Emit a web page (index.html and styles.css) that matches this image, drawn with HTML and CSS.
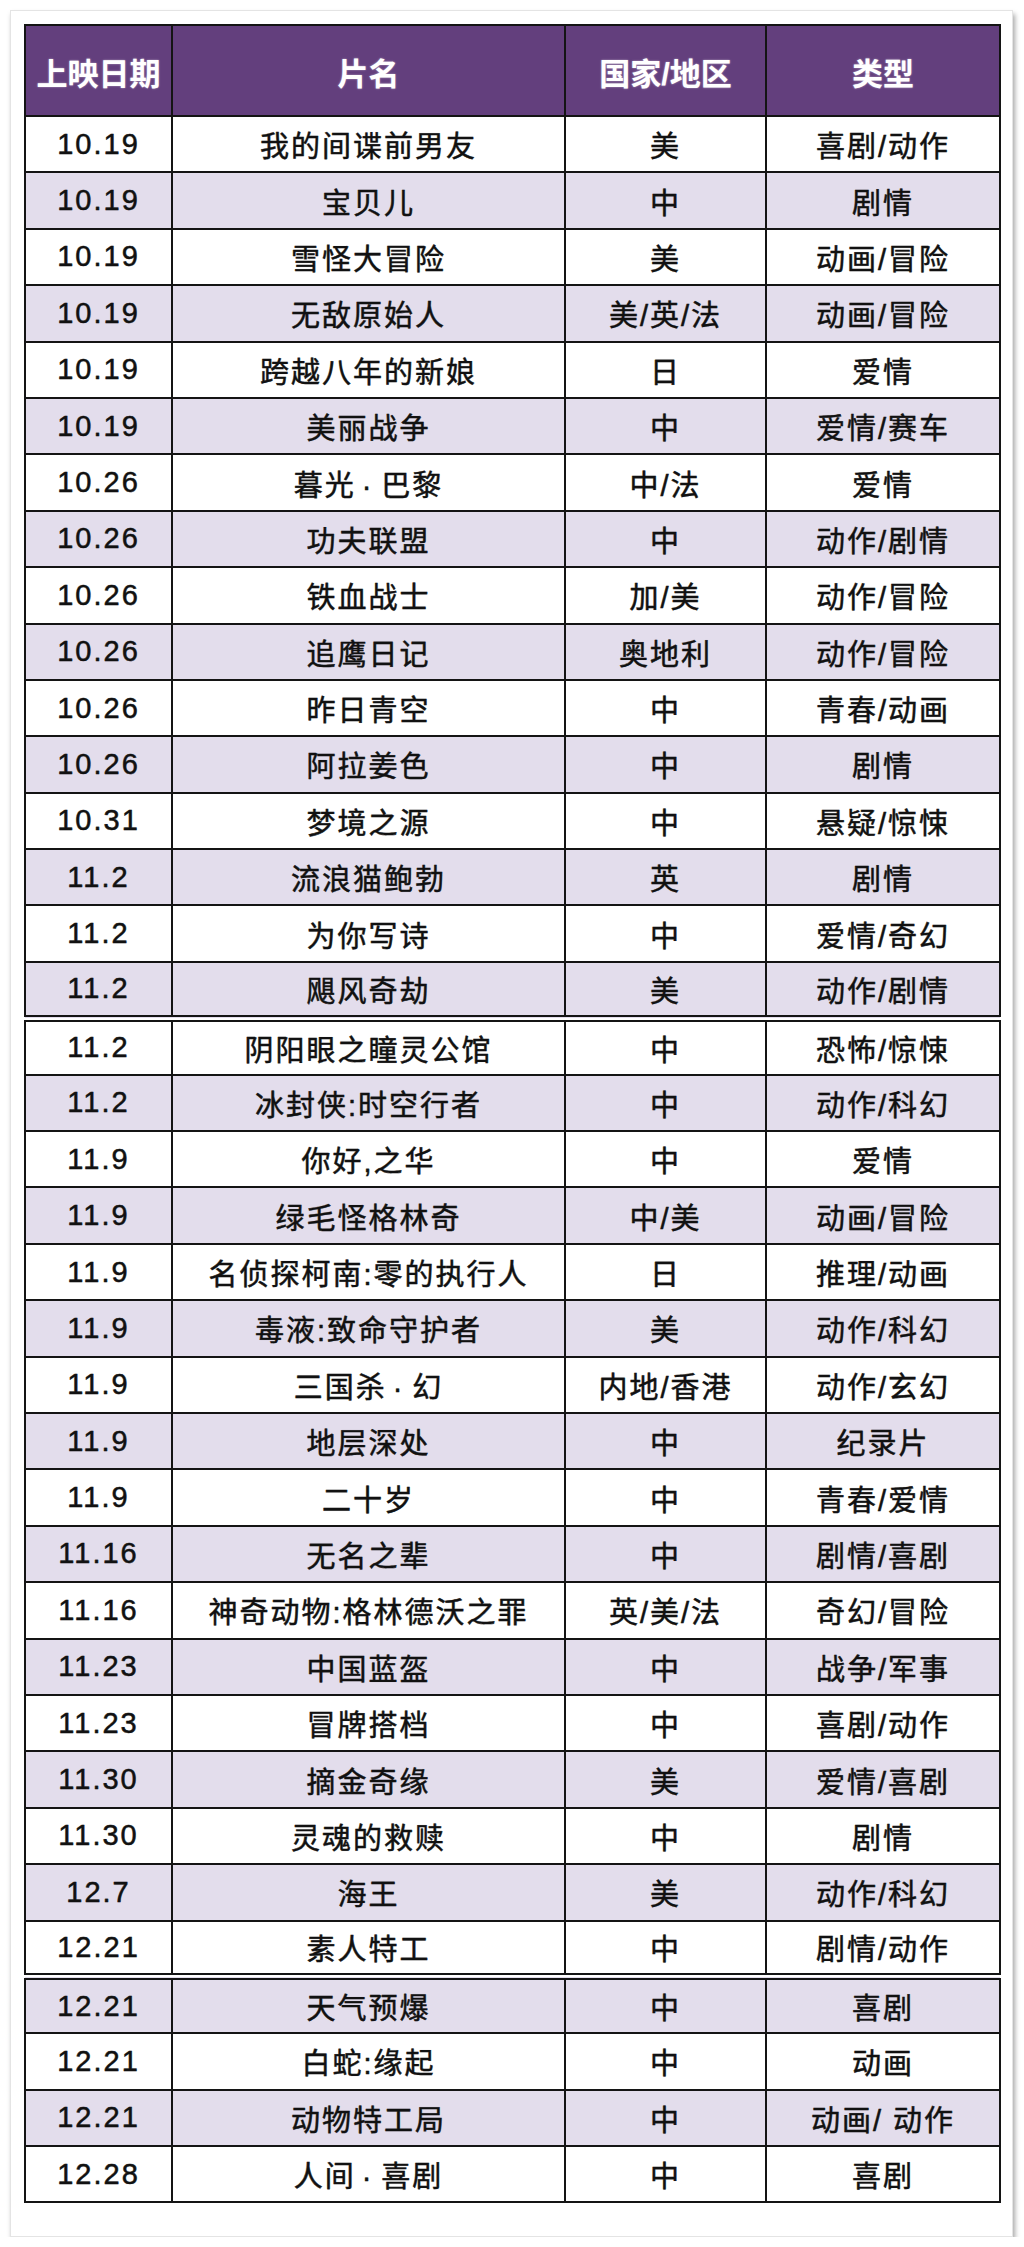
FILE: index.html
```html
<!DOCTYPE html>
<html lang="zh-CN">
<head>
<meta charset="utf-8">
<title>上映影片</title>
<link rel="stylesheet" href="styles.css">
</head>
<body>
<div class="card">
<table class="films">
<colgroup>
<col class="c-date"><col class="c-title"><col class="c-region"><col class="c-genre">
</colgroup>
<thead>
<tr><th>上映日期</th><th>片名</th><th>国家/地区</th><th>类型</th></tr>
</thead>
<tbody>
<tr><td>10.19</td><td>我的间谍前男友</td><td>美</td><td>喜剧/动作</td></tr>
<tr><td>10.19</td><td>宝贝儿</td><td>中</td><td>剧情</td></tr>
<tr><td>10.19</td><td>雪怪大冒险</td><td>美</td><td>动画/冒险</td></tr>
<tr><td>10.19</td><td>无敌原始人</td><td>美/英/法</td><td>动画/冒险</td></tr>
<tr><td>10.19</td><td>跨越八年的新娘</td><td>日</td><td>爱情</td></tr>
<tr><td>10.19</td><td>美丽战争</td><td>中</td><td>爱情/赛车</td></tr>
<tr><td>10.26</td><td>暮光<span class="dot">·</span>巴黎</td><td>中/法</td><td>爱情</td></tr>
<tr><td>10.26</td><td>功夫联盟</td><td>中</td><td>动作/剧情</td></tr>
<tr><td>10.26</td><td>铁血战士</td><td>加/美</td><td>动作/冒险</td></tr>
<tr><td>10.26</td><td>追鹰日记</td><td>奥地利</td><td>动作/冒险</td></tr>
<tr><td>10.26</td><td>昨日青空</td><td>中</td><td>青春/动画</td></tr>
<tr><td>10.26</td><td>阿拉姜色</td><td>中</td><td>剧情</td></tr>
<tr><td>10.31</td><td>梦境之源</td><td>中</td><td>悬疑/惊悚</td></tr>
<tr><td>11.2</td><td>流浪猫鲍勃</td><td>英</td><td>剧情</td></tr>
<tr><td>11.2</td><td>为你写诗</td><td>中</td><td>爱情/奇幻</td></tr>
<tr class="split"><td>11.2</td><td>飓风奇劫</td><td>美</td><td>动作/剧情</td></tr>
<tr><td>11.2</td><td>阴阳眼之瞳灵公馆</td><td>中</td><td>恐怖/惊悚</td></tr>
<tr><td>11.2</td><td>冰封侠:时空行者</td><td>中</td><td>动作/科幻</td></tr>
<tr><td>11.9</td><td>你好,之华</td><td>中</td><td>爱情</td></tr>
<tr><td>11.9</td><td>绿毛怪格林奇</td><td>中/美</td><td>动画/冒险</td></tr>
<tr><td>11.9</td><td>名侦探柯南:零的执行人</td><td>日</td><td>推理/动画</td></tr>
<tr><td>11.9</td><td>毒液:致命守护者</td><td>美</td><td>动作/科幻</td></tr>
<tr><td>11.9</td><td>三国杀<span class="dot">·</span>幻</td><td>内地/香港</td><td>动作/玄幻</td></tr>
<tr><td>11.9</td><td>地层深处</td><td>中</td><td>纪录片</td></tr>
<tr><td>11.9</td><td>二十岁</td><td>中</td><td>青春/爱情</td></tr>
<tr><td>11.16</td><td>无名之辈</td><td>中</td><td>剧情/喜剧</td></tr>
<tr><td>11.16</td><td>神奇动物:格林德沃之罪</td><td>英/美/法</td><td>奇幻/冒险</td></tr>
<tr><td>11.23</td><td>中国蓝盔</td><td>中</td><td>战争/军事</td></tr>
<tr><td>11.23</td><td>冒牌搭档</td><td>中</td><td>喜剧/动作</td></tr>
<tr><td>11.30</td><td>摘金奇缘</td><td>美</td><td>爱情/喜剧</td></tr>
<tr><td>11.30</td><td>灵魂的救赎</td><td>中</td><td>剧情</td></tr>
<tr><td>12.7</td><td>海王</td><td>美</td><td>动作/科幻</td></tr>
<tr class="split"><td>12.21</td><td>素人特工</td><td>中</td><td>剧情/动作</td></tr>
<tr><td>12.21</td><td>天气预爆</td><td>中</td><td>喜剧</td></tr>
<tr><td>12.21</td><td>白蛇:缘起</td><td>中</td><td>动画</td></tr>
<tr><td>12.21</td><td>动物特工局</td><td>中</td><td>动画/ 动作</td></tr>
<tr><td>12.28</td><td>人间<span class="dot">·</span>喜剧</td><td>中</td><td>喜剧</td></tr>
</tbody>
</table>
</div>
</body>
</html>
```

FILE: styles.css
```css
html, body {
  margin: 0;
  padding: 0;
  background: #ffffff;
}

body {
  font-family: "Liberation Sans", "Noto Sans CJK SC", sans-serif;
}

.card {
  box-sizing: border-box;
  width: 1003px;
  height: 2227px;
  margin: 10px 0 0 10px;
  padding: 14px 14px 0 14px;
  background: #ffffff;
  border: 1px solid #e4e4e4;
  box-shadow: 2px 4px 5px rgba(0, 0, 0, 0.35);
}

.films {
  width: 975px;
  border-collapse: collapse;
  table-layout: fixed;
  margin: -1px 0 0 -1px;
}

.c-date { width: 147px; }
.c-title { width: 393px; }
.c-region { width: 201px; }
.c-genre { width: 234px; }

.films th,
.films td {
  border: 2px solid #141414;
  padding: 0;
  text-align: center;
  vertical-align: middle;
  white-space: nowrap;
}

.films thead tr {
  height: 91px;
}

.films th {
  background: #633f7d;
  color: #ffffff;
  font-size: 31px;
  font-weight: bold;
  text-shadow: 0 0 2px rgba(255, 255, 255, 0.55);
  padding-top: 2px;
}

.films tbody tr {
  height: 56.4px;
  background: #ffffff;
}

.films tbody tr:nth-child(even) {
  background: #e3ddec;
}

.films td {
  font-size: 29px;
  letter-spacing: 2px;
  color: #111111;
  -webkit-text-stroke: 0.4px #111111;
  text-shadow: 0 0 1px rgba(0, 0, 0, 0.3);
}

.films .dot {
  margin: 0 8px 0 6px;
}

.films tr.split td {
  border-bottom: 7px double #141414;
}
```
